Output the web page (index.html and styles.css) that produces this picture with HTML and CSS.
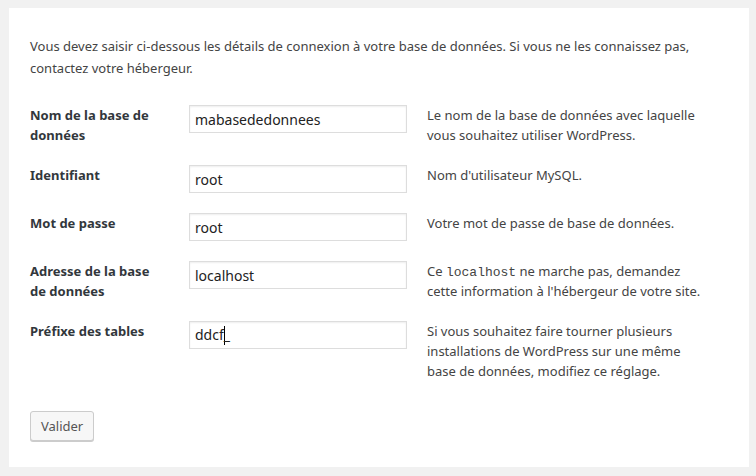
FILE: index.html
```html
<!DOCTYPE html>
<html lang="fr">
<head>
  <meta charset="UTF-8" />
  <title>Configuration de WordPress</title>
  <link rel="stylesheet" href="styles.css">
</head>
<body>
  <form class="setup" method="post" action="setup-config.php?step=2">
    <p class="intro">Vous devez saisir ci-dessous les détails de connexion à votre base de données. Si vous ne les connaissez pas, contactez votre hébergeur.</p>

    <table class="form-table">
      <tr>
        <th><label for="dbname">Nom de la base de données</label></th>
        <td class="field-cell"><input type="text" id="dbname" name="dbname" value="mabasededonnees"></td>
        <td class="help">Le nom de la base de données avec laquelle vous souhaitez utiliser WordPress.</td>
      </tr>
      <tr>
        <th><label for="uname">Identifiant</label></th>
        <td class="field-cell"><input type="text" id="uname" name="uname" value="root"></td>
        <td class="help">Nom d'utilisateur MySQL.</td>
      </tr>
      <tr>
        <th><label for="pwd">Mot de passe</label></th>
        <td class="field-cell"><input type="text" id="pwd" name="pwd" value="root"></td>
        <td class="help">Votre mot de passe de base de données.</td>
      </tr>
      <tr>
        <th><label for="dbhost">Adresse de la base de données</label></th>
        <td class="field-cell"><input type="text" id="dbhost" name="dbhost" value="localhost"></td>
        <td class="help">Ce <code>localhost</code> ne marche pas, demandez cette information à l'hébergeur de votre site.</td>
      </tr>
      <tr>
        <th><label for="prefix">Préfixe des tables</label></th>
        <td class="field-cell"><span class="fake-input" id="prefix" role="textbox">ddcf<span class="caret"></span>_</span></td>
        <td class="help">Si vous souhaitez faire tourner plusieurs installations de WordPress sur une même base de données, modifiez ce réglage.</td>
      </tr>
    </table>

    <button type="submit" class="button">Valider</button>
  </form>
</body>
</html>
```
FILE: styles.css
```css
body {
  margin: 8px 7px 0 9px;
  background: #f1f1f1;
  font-family: 'Noto Sans', 'Open Sans', sans-serif;
  font-size: 13px;
  color: #444;
}

.setup {
  background: #fff;
  padding: 27px 21px 26px;
  box-shadow: 0 1px 3px rgba(0, 0, 0, 0.13);
}

.intro {
  margin: 0 0 16px;
  line-height: 22px;
}

.form-table {
  border-collapse: collapse;
  width: 100%;
}

.form-table th,
.form-table td {
  padding: 10px 20px 10px 0;
  vertical-align: top;
  line-height: 20px;
  text-align: left;
}

.form-table th {
  width: 140px;
  padding-right: 19px;
  font-weight: bold;
  color: #32373c;
}

.form-table th label {
  display: block;
  max-width: 132px;
}

.form-table .field-cell {
  width: 218px;
}

.form-table input,
.fake-input {
  display: block;
  width: 218px;
  height: 28px;
  box-sizing: border-box;
  margin: 0;
  padding: 3px 5px;
  border: 1px solid #ddd;
  box-shadow: inset 0 1px 2px rgba(0, 0, 0, 0.07);
  font-family: 'Noto Sans', 'Open Sans', sans-serif;
  font-size: 14px;
  line-height: 20px;
  color: #222;
  background: #fff;
}

.caret {
  display: inline-block;
  width: 1px;
  height: 19px;
  margin-right: -1px;
  background: #000;
  vertical-align: -5px;
}

.help {
  color: #444;
}

code {
  font-family: 'Liberation Mono', 'DejaVu Sans Mono', monospace;
  font-size: 13px;
  line-height: 1;
}

.button {
  display: block;
  height: 30px;
  margin-top: 20px;
  padding: 0 10px;
  background: #f7f7f7;
  border: 1px solid #ccc;
  border-radius: 3px;
  box-shadow: 0 1px 0 #ccc;
  font-family: 'Noto Sans', 'Open Sans', sans-serif;
  font-size: 13px;
  color: #555;
  cursor: pointer;
}
```
